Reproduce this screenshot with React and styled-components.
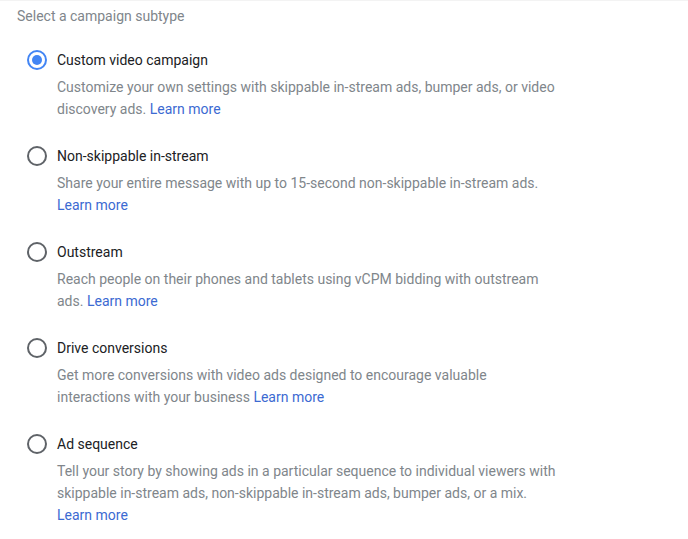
import React, { useState } from "react";
import styled, { createGlobalStyle } from "styled-components";

const GlobalStyle = createGlobalStyle`
  html, body {
    margin: 0;
    padding: 0;
    background: #ffffff;
    font-family: Roboto, "Liberation Sans", Arial, sans-serif;
  }
`;

const options = [
  {
    id: "custom",
    title: "Custom video campaign",
    text: "Customize your own settings with skippable in-stream ads, bumper ads, or video discovery ads.",
  },
  {
    id: "nonskip",
    title: "Non-skippable in-stream",
    text: "Share your entire message with up to 15-second non-skippable in-stream ads.",
  },
  {
    id: "outstream",
    title: "Outstream",
    text: "Reach people on their phones and tablets using vCPM bidding with outstream ads.",
  },
  {
    id: "conversions",
    title: "Drive conversions",
    text: "Get more conversions with video ads designed to encourage valuable interactions with your business",
  },
  {
    id: "sequence",
    title: "Ad sequence",
    text: "Tell your story by showing ads in a particular sequence to individual viewers with skippable in-stream ads, non-skippable in-stream ads, bumper ads, or a mix.",
  },
];

function App() {
  const [selected, setSelected] = useState("custom");

  return (
    <>
      <GlobalStyle />
      <Panel>
        <Heading>Select a campaign subtype</Heading>
        <List>
          {options.map((opt) => (
            <Option key={opt.id} onClick={() => setSelected(opt.id)}>
              <Radio $checked={selected === opt.id} />
              <Body>
                <Title>{opt.title}</Title>
                <Description>
                  {opt.text} <Link href="#">Learn more</Link>
                </Description>
              </Body>
            </Option>
          ))}
        </List>
      </Panel>
    </>
  );
}

const Panel = styled.div`
  border-top: 1px solid #f3f3f3;
  padding: 5px 17px 0 17px;
`;

const Heading = styled.div`
  font-size: 14px;
  line-height: 20px;
  color: #80868b;
`;

const List = styled.div`
  display: flex;
  flex-direction: column;
  gap: 24px;
  margin-top: 22px;
`;

const Option = styled.div`
  display: flex;
  align-items: flex-start;
  gap: 10px;
  cursor: pointer;
`;

const Radio = styled.span`
  box-sizing: border-box;
  flex: none;
  width: 20px;
  height: 20px;
  margin: 2px 0 0 10px;
  border-radius: 50%;
  border: 2px solid ${(p) => (p.$checked ? "#4285f4" : "#5f6368")};
  display: flex;
  align-items: center;
  justify-content: center;
  &::after {
    content: "";
    width: 10px;
    height: 10px;
    border-radius: 50%;
    background: #4285f4;
    display: ${(p) => (p.$checked ? "block" : "none")};
  }
`;

const Body = styled.div`
  display: flex;
  flex-direction: column;
  gap: 4px;
  max-width: 500px;
  min-height: 72px;
`;

const Title = styled.div`
  font-size: 14px;
  line-height: 24px;
  color: #202124;
`;

const Description = styled.div`
  font-size: 14px;
  line-height: 22px;
  color: #80868b;
`;

const Link = styled.a`
  color: #3c6ad2;
  text-decoration: none;
`;

export default App;
